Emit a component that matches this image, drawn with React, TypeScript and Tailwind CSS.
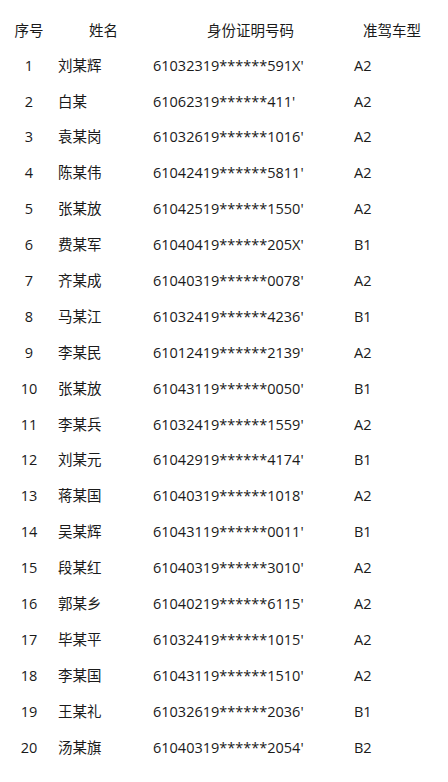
import React from "react";

const rows: [string, string, string][] = [
  ["刘某辉", "61032319******591X'", "A2"],
  ["白某", "61062319******411'", "A2"],
  ["袁某岗", "61032619******1016'", "A2"],
  ["陈某伟", "61042419******5811'", "A2"],
  ["张某放", "61042519******1550'", "A2"],
  ["费某军", "61040419******205X'", "B1"],
  ["齐某成", "61040319******0078'", "A2"],
  ["马某江", "61032419******4236'", "B1"],
  ["李某民", "61012419******2139'", "A2"],
  ["张某放", "61043119******0050'", "B1"],
  ["李某兵", "61032419******1559'", "A2"],
  ["刘某元", "61042919******4174'", "B1"],
  ["蒋某国", "61040319******1018'", "A2"],
  ["吴某辉", "61043119******0011'", "B1"],
  ["段某红", "61040319******3010'", "A2"],
  ["郭某乡", "61040219******6115'", "A2"],
  ["毕某平", "61032419******1015'", "A2"],
  ["李某国", "61043119******1510'", "A2"],
  ["王某礼", "61032619******2036'", "B1"],
  ["汤某旗", "61040319******2054'", "B2"],
];

const font = "font-['Open_Sans','Noto_Sans_CJK_SC',sans-serif]";

export default function App() {
  return (
    <div className={`w-[448px] h-[782px] bg-white pt-[14px] text-[#1a1a1a] text-[14.5px] ${font}`}>
      <div className="grid grid-cols-[58px_95px_199px_1fr] h-[34px] items-center leading-none">
        <div className="text-center">序号</div>
        <div className="pl-[31px]">姓名</div>
        <div className="pl-[54px]">身份证明号码</div>
        <div className="pl-[11px]">准驾车型</div>
      </div>
      {rows.map(([name, id, type], i) => (
        <div key={i} className="grid grid-cols-[58px_95px_199px_1fr] h-[35.9px] items-center leading-none">
          <div className="text-center">{i + 1}</div>
          <div>{name}</div>
          <div>{id}</div>
          <div className="pl-[2px]">{type}</div>
        </div>
      ))}
    </div>
  );
}
